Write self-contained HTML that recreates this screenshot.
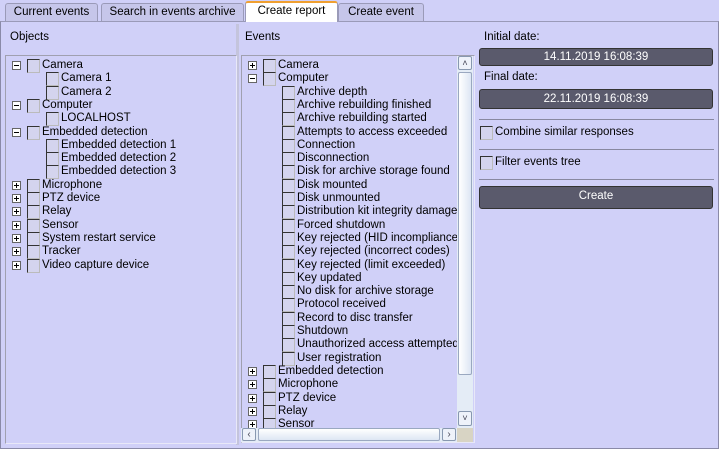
<!DOCTYPE html><html><head><style>
body{margin:0;width:719px;height:449px;overflow:hidden;background:#d0d0f8;font-family:"Liberation Sans",sans-serif;font-size:11.5px;color:#000;position:relative}
.a{position:absolute}
.tab{position:absolute;top:3px;height:18px;border:1px solid #9a9ab8;border-bottom:none;border-radius:3px 3px 0 0;background:#c6c6ea;text-align:center;line-height:17px;box-sizing:border-box}
.tab.s{background:#fff;top:1px;height:21px;border-top:2px solid #f0a030}
.box{position:absolute;border:1px solid #a0a0b0;border-right-color:#e8e8f8;border-bottom-color:#e8e8f8;background:#d0d0f8;overflow:hidden}
.r{position:absolute;height:13px;line-height:13px;white-space:nowrap}
.ex{position:absolute;width:7px;height:7px;border:1px solid #666;background:#fff;top:2px}
.ex:before{content:"";position:absolute;left:1px;top:3px;width:5px;height:1px;background:#000}
.ex.p:after{content:"";position:absolute;left:3px;top:1px;width:1px;height:5px;background:#000}
.cb{position:absolute;width:11px;height:12px;border:1px solid #333;border-right-color:#bbb;border-bottom-color:#bbb;background:#d4d4ee;top:0}
.date{position:absolute;left:479px;width:234px;background:#5a5a6c;border:1px solid #333;border-radius:3px;color:#fff;text-align:center;box-sizing:border-box}
.hr{position:absolute;left:479px;width:235px;height:1px;background:#8888a0}
</style></head><body>
<div class="a" style="left:0;top:21px;width:717px;height:426px;border:1px solid #8a8aa8;border-top-color:#9a9ab8"></div>
<div class="tab" style="left:5px;width:93px">Current events</div>
<div class="tab" style="left:101px;width:143px">Search in events archive</div>
<div class="tab s" style="left:245px;width:93px">Create report</div>
<div class="tab" style="left:338px;width:86px">Create event</div>
<div class="a" style="left:10px;top:31px">Objects</div>
<div class="a" style="left:245px;top:31px">Events</div>
<div class="a" style="left:236px;top:24px;width:3px;height:421px;background:#c4c4dc"></div>
<div class="box" style="left:5px;top:55px;width:230px;height:387px" id="L"></div>
<div class="box" style="left:241px;top:55px;width:232px;height:386px" id="E"></div>
<div class="a" style="left:457px;top:56px;width:16px;height:372px;background:#e4ecf6"></div>
<div class="a" style="left:458px;top:56px;width:14px;height:14px;border:1px solid #8898b0;border-radius:2px;box-sizing:border-box;background:#eef2fa;font-size:9px;text-align:center;line-height:12px;color:#445">&#708;</div>
<div class="a" style="left:458px;top:72px;width:14px;height:303px;border:1px solid #9aa8c0;border-radius:2px;box-sizing:border-box;background:linear-gradient(90deg,#fff,#dde6f4)"></div>
<div class="a" style="left:458px;top:411px;width:14px;height:15px;border:1px solid #8898b0;border-radius:2px;box-sizing:border-box;background:#eef2fa;font-size:9px;text-align:center;line-height:13px;color:#445">&#709;</div>
<div class="a" style="left:241px;top:428px;width:216px;height:14px;background:#e4ecf6"></div>
<div class="a" style="left:242px;top:428px;width:14px;height:13px;border:1px solid #8898b0;border-radius:2px;box-sizing:border-box;background:#eef2fa;font-size:10px;text-align:center;line-height:11px;color:#445">&lsaquo;</div>
<div class="a" style="left:258px;top:428px;width:182px;height:13px;border:1px solid #9aa8c0;border-radius:2px;box-sizing:border-box;background:linear-gradient(#fff,#dde6f4)"></div>
<div class="a" style="left:442px;top:428px;width:14px;height:13px;border:1px solid #8898b0;border-radius:2px;box-sizing:border-box;background:#eef2fa;font-size:10px;text-align:center;line-height:11px;color:#445">&rsaquo;</div>
<div class="a" style="left:457px;top:428px;width:16px;height:14px;background:#d8d4c4"></div>
<div class="a" style="left:484px;top:31px">Initial date:</div>
<div class="date" style="top:48px;height:18px;line-height:16px">14.11.2019 16:08:39</div>
<div class="a" style="left:484px;top:71px">Final date:</div>
<div class="date" style="top:89px;height:20px;line-height:18px">22.11.2019 16:08:39</div>
<div class="hr" style="top:119px"></div>
<div class="cb" style="left:480px;top:126px"></div><div class="a" style="left:495px;top:126px">Combine similar responses</div>
<div class="hr" style="top:149px"></div>
<div class="cb" style="left:480px;top:156px"></div><div class="a" style="left:495px;top:156px">Filter events tree</div>
<div class="hr" style="top:179px"></div>
<div class="date" style="top:186px;height:23px;line-height:18px">Create</div>
<script>
function tree(id,items,x0){var b=document.getElementById(id),h="";items.forEach(function(it,i){var y=i*13.3+3;var t=it[0],lvl=it[1];if(lvl==0){h+='<div class="ex'+(t=="+"?" p":"")+'" style="left:'+x0+'px;top:'+(y+2)+'px"></div><div class="cb" style="left:'+(x0+15)+'px;top:'+y+'px"></div><div class="r" style="left:'+(x0+30)+'px;top:'+y+'px">'+it[2]+'</div>';}else{h+='<div class="cb" style="left:'+(x0+34)+'px;top:'+y+'px"></div><div class="r" style="left:'+(x0+49)+'px;top:'+y+'px">'+it[2]+'</div>';}});b.innerHTML=h;}
tree("L",[["-",0,"Camera"],["",1,"Camera 1"],["",1,"Camera 2"],["-",0,"Computer"],["",1,"LOCALHOST"],["-",0,"Embedded detection"],["",1,"Embedded detection 1"],["",1,"Embedded detection 2"],["",1,"Embedded detection 3"],["+",0,"Microphone"],["+",0,"PTZ device"],["+",0,"Relay"],["+",0,"Sensor"],["+",0,"System restart service"],["+",0,"Tracker"],["+",0,"Video capture device"]],6);
var ev=["Archive depth","Archive rebuilding finished","Archive rebuilding started","Attempts to access exceeded","Connection","Disconnection","Disk for archive storage found","Disk mounted","Disk unmounted","Distribution kit integrity damaged","Forced shutdown","Key rejected (HID incompliance)","Key rejected (incorrect codes)","Key rejected (limit exceeded)","Key updated","No disk for archive storage","Protocol received","Record to disc transfer","Shutdown","Unauthorized access attempted","User registration"];
var it=[["+",0,"Camera"],["-",0,"Computer"]];ev.forEach(function(e){it.push(["",1,e])});["Embedded detection","Microphone","PTZ device","Relay","Sensor"].forEach(function(e){it.push(["+",0,e])});
tree("E",it,6);
</script>
</body></html>
